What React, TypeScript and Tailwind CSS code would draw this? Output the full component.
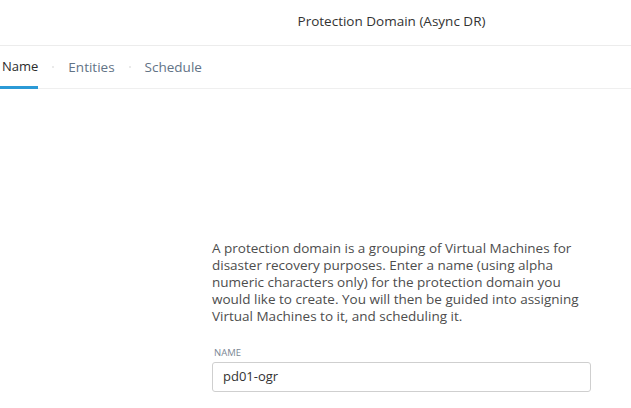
import React from "react";

export default function App() {
  return (
    <div className="w-[631px] h-[408px] overflow-hidden bg-white text-[#333] [font-family:'Open_Sans','Noto_Sans',sans-serif]">
      <div className="h-[46px] border-b border-[#ececec] flex items-center justify-center pl-[152px]">
        <span className="text-[13.5px] text-[#333] pb-[2px]">Protection Domain (Async DR)</span>
      </div>
      <div className="h-[43px] border-b border-[#efefef] flex items-stretch">
        <div className="relative flex items-center pl-[2px]">
          <span className="text-[13px] text-[#2c2c2c]">Name</span>
          <div className="absolute left-0 right-0 bottom-[-1px] h-[3px] bg-[#2b9ad6]" />
        </div>
        <div className="flex items-center px-[14px]">
          <span className="w-[2px] h-[2px] rounded-full bg-[#e3e3e3]" />
        </div>
        <div className="flex items-center">
          <span className="text-[13.5px] text-[#627386]">Entities</span>
        </div>
        <div className="flex items-center px-[14px]">
          <span className="w-[2px] h-[2px] rounded-full bg-[#e3e3e3]" />
        </div>
        <div className="flex items-center">
          <span className="text-[13.5px] text-[#627386]">Schedule</span>
        </div>
      </div>
      <div className="pl-[212px] pt-[151px] w-[591px]">
        <p className="text-[13.5px] leading-[17px] text-[#4d4d4d]">
          A protection domain is a grouping of Virtual Machines for disaster recovery purposes. Enter a name (using alpha numeric characters only) for the protection domain you would like to create. You will then be guided into assigning Virtual Machines to it, and scheduling it.
        </p>
        <div className="mt-[21px] pl-[2px] text-[9.5px] leading-[14px] text-[#7b8794] uppercase">Name</div>
        <div className="mt-[2px] h-[30px] border border-[#cfcfcf] rounded-[3px] flex items-center px-[10px]">
          <span className="text-[13px] text-[#333]">pd01-ogr</span>
        </div>
      </div>
    </div>
  );
}
